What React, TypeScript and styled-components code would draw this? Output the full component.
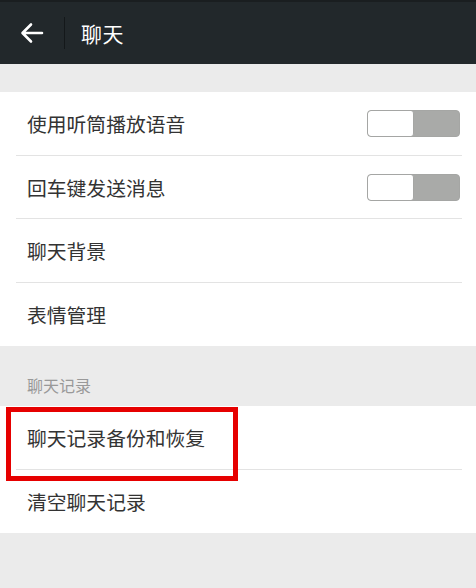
import React from "react";
import styled, { createGlobalStyle } from "styled-components";

const Global = createGlobalStyle`
  html, body { margin: 0; padding: 0; background: #ebebeb; }
  body { font-family: "Noto Sans CJK SC", "Noto Sans", sans-serif; }
`;

const Page = styled.div`
  width: 476px;
  min-height: 588px;
  background: #ebebeb;
  display: flex;
  flex-direction: column;
`;

const Header = styled.header`
  height: 64px;
  background: #22282b;
  border-top: 2px solid #1a1e20;
  box-sizing: border-box;
  display: flex;
  align-items: center;
`;

const BackButton = styled.div`
  width: 64px;
  height: 100%;
  display: flex;
  align-items: center;
  justify-content: center;
`;

const VDivider = styled.div`
  width: 1px;
  height: 32px;
  background: #14181a;
`;

const Title = styled.h1`
  margin: 0 0 0 16px;
  font-size: 21px;
  font-weight: 400;
  color: #ffffff;
  letter-spacing: 0.5px;
`;

const Spacer = styled.div<{ $h: number }>`
  height: ${(p) => p.$h}px;
`;

const Section = styled.section`
  background: #ffffff;
  display: flex;
  flex-direction: column;
`;

const Row = styled.div<{ $last?: boolean }>`
  position: relative;
  height: 63.5px;
  display: flex;
  align-items: center;
  justify-content: space-between;
  padding: 0 16px 0 27px;
  &::after {
    content: "";
    display: ${(p) => (p.$last ? "none" : "block")};
    position: absolute;
    left: 16px;
    right: 14px;
    bottom: 0;
    height: 1px;
    background: #e3e3e3;
  }
`;

const RowText = styled.span`
  font-size: 19.8px;
  color: #333333;
`;

const Toggle = styled.div`
  width: 93px;
  height: 27px;
  box-sizing: border-box;
  border: 1px solid #a5a6a4;
  border-radius: 4px;
  background: #a9aaa8;
  display: flex;
  overflow: hidden;
`;

const Knob = styled.div`
  width: 46px;
  height: 100%;
  background: #ffffff;
  border-radius: 3px;
  box-sizing: border-box;
  border-right: 1px solid #a5a6a4;
`;

const GroupLabel = styled.div`
  height: 60px;
  box-sizing: border-box;
  padding: 27px 0 0 27px;
  font-size: 16px;
  color: #999999;
`;

const Highlight = styled.div`
  position: absolute;
  left: 6px;
  top: 1px;
  width: 232px;
  height: 74px;
  box-sizing: border-box;
  border: 5px solid #e60000;
  pointer-events: none;
`;

const Relative = styled.div`
  position: relative;
`;

const Fill = styled.div`
  flex: 1;
  background: #ebebeb;
`;

const BackArrow = () => (
  <svg width="24" height="22" viewBox="0 0 24 22" fill="none">
    <path
      d="M22 11H3M11 2.5L2.5 11L11 19.5"
      stroke="#ffffff"
      strokeWidth="2.6"
      strokeLinecap="round"
      strokeLinejoin="round"
    />
  </svg>
);

export default function App() {
  return (
    <Page>
      <Global />
      <Header>
        <BackButton>
          <BackArrow />
        </BackButton>
        <VDivider />
        <Title>聊天</Title>
      </Header>
      <Spacer $h={28} />
      <Section>
        <Row>
          <RowText>使用听筒播放语音</RowText>
          <Toggle>
            <Knob />
          </Toggle>
        </Row>
        <Row>
          <RowText>回车键发送消息</RowText>
          <Toggle>
            <Knob />
          </Toggle>
        </Row>
        <Row>
          <RowText>聊天背景</RowText>
        </Row>
        <Row $last>
          <RowText>表情管理</RowText>
        </Row>
      </Section>
      <GroupLabel>聊天记录</GroupLabel>
      <Relative>
        <Section>
          <Row>
            <RowText>聊天记录备份和恢复</RowText>
          </Row>
          <Row $last>
            <RowText>清空聊天记录</RowText>
          </Row>
        </Section>
        <Highlight />
      </Relative>
      <Fill />
    </Page>
  );
}
